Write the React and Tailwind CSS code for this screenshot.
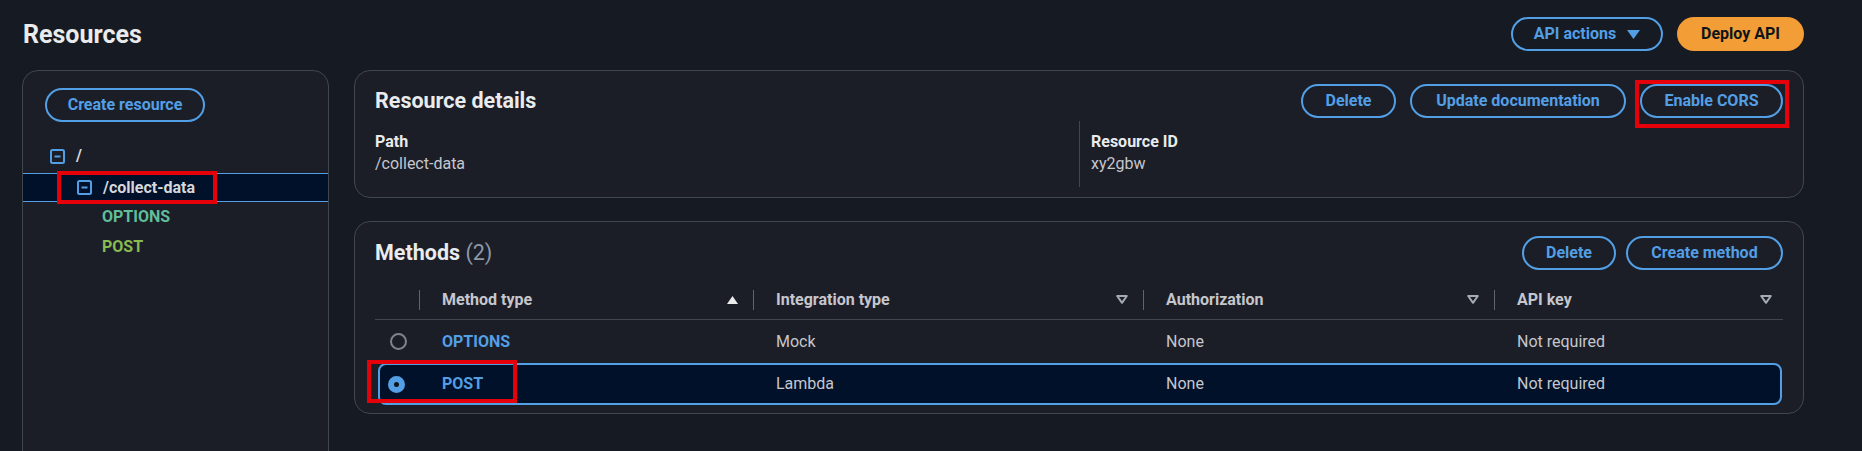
import React from "react";

function PillButton({ children, className = "" }) {
  return (
    <button
      className={`flex h-[34px] shrink-0 items-center justify-center rounded-full border-2 border-[#539fe5] text-[16px] font-bold text-[#539fe5] ${className}`}
    >
      {children}
    </button>
  );
}

function MinusBox() {
  return (
    <svg width="15" height="15" viewBox="0 0 15 15" fill="none" className="shrink-0">
      <rect x="1" y="1" width="13" height="13" rx="1.5" stroke="#539fe5" strokeWidth="2" />
      <path d="M4.5 7.5h6" stroke="#539fe5" strokeWidth="2" />
    </svg>
  );
}

function SortUp() {
  return (
    <svg width="11" height="8" viewBox="0 0 11 8">
      <polygon points="5.5,0 11,8 0,8" fill="#e9ebed" />
    </svg>
  );
}

function SortNone() {
  return (
    <svg width="12" height="9" viewBox="0 0 12 9" fill="none">
      <path d="M1.2 1h9.6L6 7.8z" stroke="#a4abb3" strokeWidth="2" strokeLinejoin="round" />
    </svg>
  );
}

function Caret() {
  return (
    <svg width="13" height="9" viewBox="0 0 13 9">
      <polygon points="0,0 13,0 6.5,9" fill="#539fe5" />
    </svg>
  );
}

function RedMark({ className }) {
  return <span className={`pointer-events-none absolute border-4 border-[#e5000a] ${className}`} />;
}

function HeaderCell({ label, icon, last }) {
  return (
    <div
      className={`flex h-[20px] items-center justify-between border-l border-[#5f6570] pl-[22px] ${
        last ? "pr-[11px]" : "pr-[15px]"
      }`}
    >
      <span>{label}</span>
      {icon}
    </div>
  );
}

export default function App() {
  return (
    <div className="h-[451px] w-full overflow-hidden bg-[#161a22] pl-[22px] pr-[58px] pt-[17px] font-[Roboto,'Liberation_Sans',sans-serif] text-[#c6c6cd]">
      {/* page header */}
      <div className="flex h-[34px] items-center justify-between">
        <h1 className="pl-px text-[25px] font-bold leading-none text-[#e9ebed]">Resources</h1>
        <div className="flex items-center gap-[14px]">
          <PillButton className="w-[152px] gap-[11px]">
            API actions <Caret />
          </PillButton>
          <button className="flex h-[34px] w-[127px] items-center justify-center rounded-full bg-[#f29d35] text-[16px] font-bold text-[#0f141a]">
            Deploy API
          </button>
        </div>
      </div>

      <div className="mt-[19px] flex gap-[25px]">
        {/* resource tree */}
        <aside className="h-[420px] w-[307px] shrink-0 rounded-2xl border border-[#41464f] bg-[#1b1e27] pt-[17px]">
          <div className="px-[22px]">
            <PillButton className="w-[160px]">Create resource</PillButton>
          </div>
          <div className="mt-[19px] text-[16px] font-bold">
            <div className="flex h-[30px] items-center gap-[11px] pl-[27px] text-[#d5d7da]">
              <MinusBox />
              <span>/</span>
            </div>
            <div className="relative mt-[2px] flex h-[29px] items-center gap-[11px] border-y border-[#539fe5] bg-[#001129] pl-[54px] text-[#d5d7da]">
              <MinusBox />
              <span>/collect-data</span>
              <RedMark className="-top-[3px] left-[34px] h-[33px] w-[160px]" />
            </div>
            <div className="flex h-[30px] items-center pl-[79px] text-[#5fbf9a]">OPTIONS</div>
            <div className="flex h-[30px] items-center pl-[79px] text-[#88bb52]">POST</div>
          </div>
        </aside>

        <main className="flex min-w-0 flex-1 flex-col gap-[23px]">
          {/* resource details */}
          <section className="rounded-2xl border border-[#41464f] bg-[#1b1e27] px-[20px] pb-[10px] pt-[13px]">
            <div className="flex h-[34px] items-center justify-between">
              <h2 className="text-[21.5px] font-bold text-[#e9ebed]">Resource details</h2>
              <div className="flex items-center gap-[14px]">
                <PillButton className="w-[95px]">Delete</PillButton>
                <PillButton className="w-[216px]">Update documentation</PillButton>
                <div className="relative">
                  <PillButton className="w-[143px]">Enable CORS</PillButton>
                  <RedMark className="-bottom-[10px] -left-[5px] -right-[6px] -top-[4px]" />
                </div>
              </div>
            </div>
            <div className="mt-[3px] grid grid-cols-2 text-[16px] leading-[22px]">
              <div className="pb-[12px] pt-[10px]">
                <div className="font-bold text-[#e9ebed]">Path</div>
                <div>/collect-data</div>
              </div>
              <div className="border-l border-[#41464f] pb-[12px] pl-[11px] pt-[10px]">
                <div className="font-bold text-[#e9ebed]">Resource ID</div>
                <div>xy2gbw</div>
              </div>
            </div>
          </section>

          {/* methods */}
          <section className="rounded-2xl border border-[#41464f] bg-[#1b1e27] px-[20px] pb-[8px] pt-[14px]">
            <div className="flex h-[34px] items-center justify-between">
              <h2 className="text-[21.5px] font-bold text-[#e9ebed]">
                Methods <span className="font-normal text-[#8d99a8]">(2)</span>
              </h2>
              <div className="flex items-center gap-[10px]">
                <PillButton className="w-[94px]">Delete</PillButton>
                <PillButton className="w-[157px]">Create method</PillButton>
              </div>
            </div>

            <div className="mt-[10px] text-[16px]">
              <div className="grid h-[40px] grid-cols-[44px_334px_390px_351px_1fr] items-center border-b border-[#41464f] font-bold">
                <div />
                <HeaderCell label="Method type" icon={<SortUp />} />
                <HeaderCell label="Integration type" icon={<SortNone />} />
                <HeaderCell label="Authorization" icon={<SortNone />} />
                <HeaderCell label="API key" icon={<SortNone />} last />
              </div>

              <div className="grid h-[43px] grid-cols-[44px_334px_390px_351px_1fr] items-center">
                <div className="pl-[15px]">
                  <span className="block h-[17px] w-[17px] rounded-full border-2 border-[#7d848e]" />
                </div>
                <div className="pl-[23px] font-bold text-[#539fe5]">OPTIONS</div>
                <div className="pl-[23px]">Mock</div>
                <div className="pl-[23px]">None</div>
                <div className="pl-[23px]">Not required</div>
              </div>

              <div className="relative ml-[3px] mr-px grid h-[42px] grid-cols-[39px_334px_390px_351px_1fr] items-center rounded-[8px] border-2 border-[#539fe5] bg-[#001129]">
                <div className="pl-[8px]">
                  <span className="block h-[17px] w-[17px] rounded-full border-[6px] border-[#539fe5] bg-[#0f141a]" />
                </div>
                <div className="pl-[23px] font-bold text-[#539fe5]">POST</div>
                <div className="pl-[23px]">Lambda</div>
                <div className="pl-[23px]">None</div>
                <div className="pl-[23px]">Not required</div>
                <RedMark className="-left-[13px] -top-[5px] h-[43px] w-[150px]" />
              </div>
            </div>
          </section>
        </main>
      </div>
    </div>
  );
}
